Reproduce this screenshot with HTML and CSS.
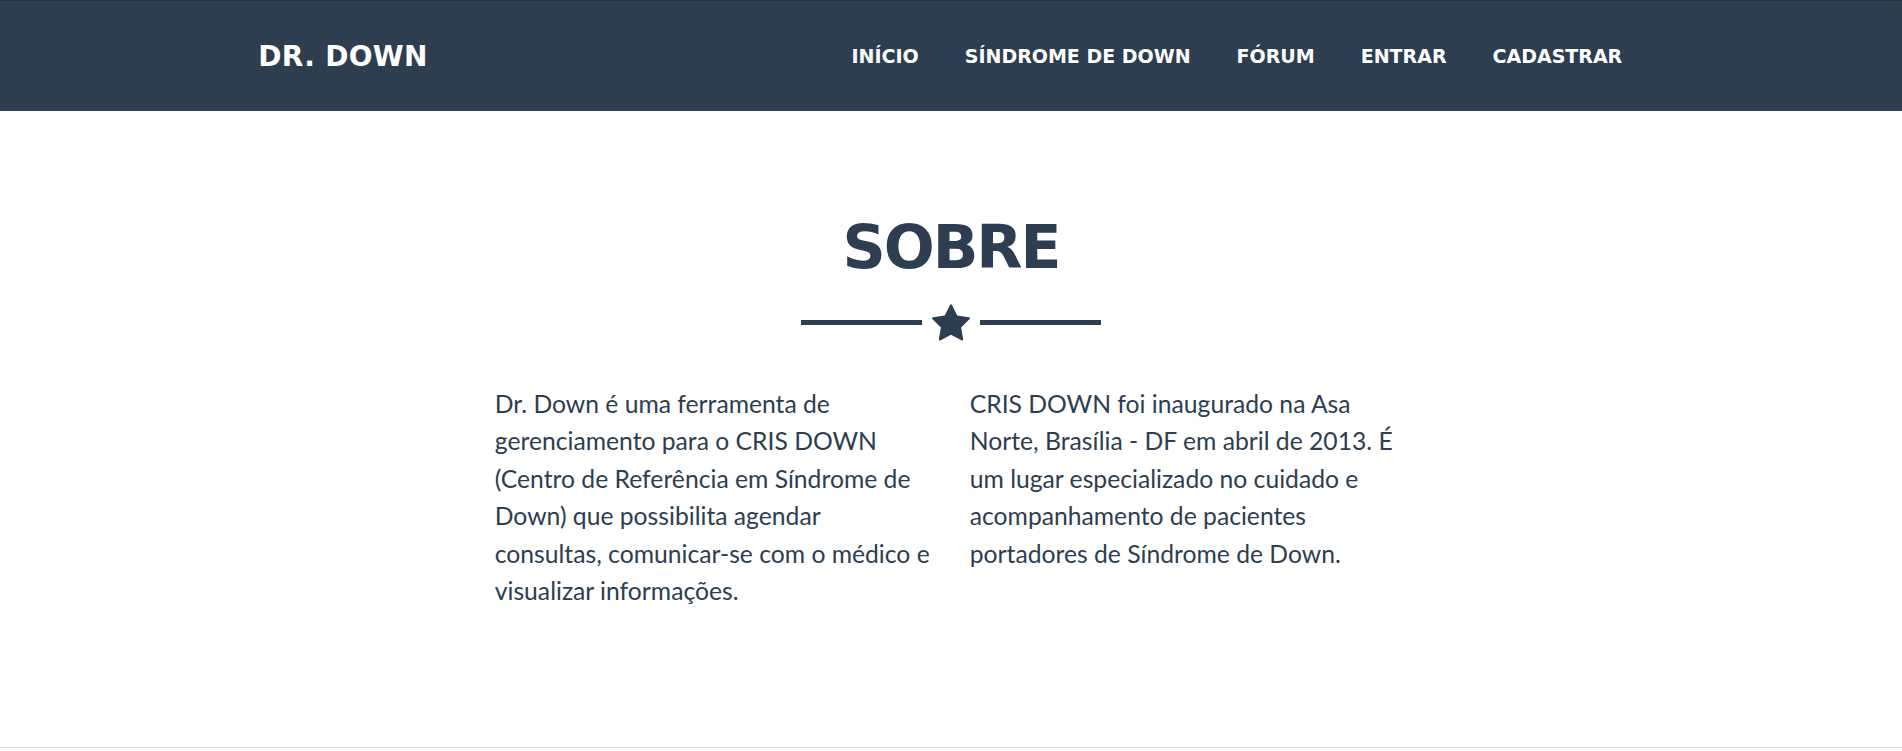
FILE: index.html
```html
<!DOCTYPE html>
<html lang="pt-BR">
<head>
<meta charset="utf-8">
<title>Dr. Down</title>
<link rel="stylesheet" href="styles.css">
</head>
<body>
<nav class="mainnav">
  <div class="container nav-inner">
    <a class="brand" href="#">DR. DOWN</a>
    <ul class="nav-list">
      <li><a class="nav-link" href="#">INÍCIO</a></li>
      <li><a class="nav-link" href="#">SÍNDROME DE DOWN</a></li>
      <li><a class="nav-link" href="#">FÓRUM</a></li>
      <li><a class="nav-link" href="#">ENTRAR</a></li>
      <li><a class="nav-link" href="#">CADASTRAR</a></li>
    </ul>
  </div>
</nav>
<section class="about">
  <div class="container">
    <h2 class="title">SOBRE</h2>
    <div class="divider">
      <span class="divider-line"></span>
      <svg class="star" viewBox="0 0 1664 1600" aria-hidden="true"><path d="M1664 615q0 22-26 48l-363 354 86 500q1 7 1 20 0 21-10.5 35.5T1321 1587q-19 0-40-12l-449-236-449 236q-22 12-40 12-21 0-31.5-14.5T301 1537q0-6 2-20l86-500L25 663Q0 636 0 615q0-37 56-46l502-73L783 41q19-41 49-41t49 41l225 455 502 73q56 9 56 46z"/></svg>
      <span class="divider-line"></span>
    </div>
    <div class="row">
      <div class="col">
        <p class="lead">Dr. Down é uma ferramenta de gerenciamento para o CRIS DOWN (Centro de Referência em Síndrome de Down) que possibilita agendar consultas, comunicar-se com o médico e visualizar informações.</p>
      </div>
      <div class="col">
        <p class="lead">CRIS DOWN foi inaugurado na Asa Norte, Brasília - DF em abril de 2013. É um lugar especializado no cuidado e acompanhamento de pacientes portadores de Síndrome de Down.</p>
      </div>
    </div>
  </div>
</section>
<div class="next-section"></div>
</body>
</html>
```
FILE: styles.css
```css
* { box-sizing: border-box; }
html, body { margin: 0; padding: 0; background: #fff; }
body {
  font-family: "Lato", "Liberation Sans", sans-serif;
  color: #2c3e50;
}
.container {
  width: 1425px;
  margin: 0 auto;
  padding: 0 18.75px;
}
.mainnav {
  background: #2c3e50;
  border-top: 1px solid #26313c;
  height: 111px;
}
.nav-inner {
  height: 100%;
  display: flex;
  align-items: center;
  justify-content: space-between;
}
.brand {
  font-family: "DejaVu Sans", "Liberation Sans", sans-serif;
  font-weight: 700;
  font-size: 28px;
  letter-spacing: 0.3px;
  color: #fff;
  text-decoration: none;
  padding-left: 1px;
}
.nav-list {
  display: flex;
  list-style: none;
  margin: 0;
  padding: 0;
}
.nav-link {
  display: block;
  padding: 0 22.5px 0 23.5px;
  font-family: "DejaVu Sans", "Liberation Sans", sans-serif;
  font-weight: 700;
  font-size: 19px;
  color: #fff;
  text-decoration: none;
}
.about {
  padding-top: 100px;
  height: 637px;
  border-bottom: 1px solid #dfe3e8;
}
.title {
  margin: 0;
  text-align: center;
  font-family: "DejaVu Sans", "Liberation Sans", sans-serif;
  font-weight: 700;
  font-size: 60px;
  line-height: 72px;
  letter-spacing: -2px;
  color: #2c3e50;
}
.divider {
  display: flex;
  align-items: center;
  justify-content: center;
  gap: 10px;
  margin-top: 21px;
}
.divider-line {
  width: 121px;
  height: 5px;
  background: #2c3e50;
}
.star {
  width: 38px;
  height: 37px;
  fill: #2c3e50;
}
.row {
  display: flex;
  justify-content: center;
  margin-top: 44px;
}
.col {
  width: 475px;
  padding: 0 20px 0 18.75px;
}
.lead {
  margin: 0;
  font-size: 24.7px;
  line-height: 37.4px;
  font-weight: 400;
}
.next-section {
  height: 2px;
}
```
